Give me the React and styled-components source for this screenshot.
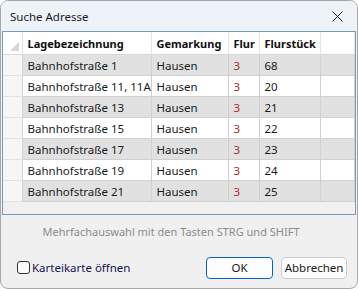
import React from "react";
import styled, { createGlobalStyle } from "styled-components";

const Global = createGlobalStyle`
  html, body {
    margin: 0;
    padding: 0;
    background: #ffffff;
  }
  body {
    font-family: "Segoe UI", "Noto Sans", "Liberation Sans", sans-serif;
  }
`;

const Window = styled.div`
  box-sizing: border-box;
  width: 358px;
  height: 289px;
  border: 1px solid #a8a8a8;
  border-radius: 8px;
  background: #f0f0f0;
  overflow: hidden;
  display: flex;
  flex-direction: column;
`;

const TitleBar = styled.div`
  height: 30px;
  flex: none;
  background: #eef3f9;
  display: flex;
  align-items: center;
  justify-content: space-between;
  padding: 0 14px 0 9px;
  font-size: 11.5px;
  color: #1a1a1a;
`;

const GridFrame = styled.div`
  flex: none;
  height: 182px;
  margin: 0 1px;
  border: 1px solid #7c98bc;
  background: #f0f0f0;
  overflow: hidden;
`;

const Table = styled.table`
  border-collapse: collapse;
  table-layout: fixed;
  width: 100%;
  font-size: 11.5px;
`;

const HeadCell = styled.th`
  height: 22px;
  padding: 0 0 0 5px;
  text-align: left;
  font-size: 11px;
  font-weight: 700;
  color: #101010;
  background: #ffffff;
  border-right: 1px solid #e4e4e4;
  border-bottom: 1px solid #d8d8d8;
  white-space: nowrap;
  overflow: hidden;
`;

const Corner = styled.th`
  position: relative;
  height: 22px;
  padding: 0;
  background: #ffffff;
  border-right: 1px solid #e4e4e4;
  border-bottom: 1px solid #d8d8d8;
  &::after {
    content: "";
    position: absolute;
    right: 3px;
    bottom: 3px;
    width: 0;
    height: 0;
    border-left: 9px solid transparent;
    border-bottom: 9px solid #d6d6d6;
  }
`;

const RowHead = styled.td`
  padding: 0;
  background: #f6f6f6;
  border-right: 1px solid #d4d4d4;
  border-bottom: 1px solid #e2e2e2;
`;

const Row = styled.tr`
  height: 21px;
  background: ${(p) => (p.$odd ? "#e1e1e1" : "#ffffff")};
`;

const Cell = styled.td`
  padding: 0 0 0 5px;
  color: ${(p) => p.$color || "#1a1a1a"};
  border-right: 1px solid #d0d0d0;
  border-bottom: 1px solid #d0d0d0;
  white-space: nowrap;
  overflow: hidden;
`;

const Hint = styled.div`
  height: 32px;
  flex: none;
  display: flex;
  align-items: center;
  justify-content: center;
  padding-right: 16px;
  font-size: 11px;
  color: #8c8c8c;
`;

const Footer = styled.div`
  flex: 1;
  display: flex;
  align-items: center;
  padding: 0 10px 0 16px;
  gap: 8px;
`;

const CheckLabel = styled.label`
  display: flex;
  align-items: center;
  gap: 2px;
  font-size: 11.5px;
  color: #141450;
  margin-right: auto;
`;

const Box = styled.span`
  box-sizing: border-box;
  width: 13px;
  height: 13px;
  border: 1px solid #333;
  border-radius: 3px;
  background: #fafafa;
`;

const Button = styled.button`
  box-sizing: border-box;
  width: ${(p) => (p.$primary ? "67px" : "66px")};
  height: 22px;
  font-family: inherit;
  font-size: 11.5px;
  color: #1a1a1a;
  background: #fdfdfd;
  border: 1px solid ${(p) => (p.$primary ? "#0067c0" : "#cfcfcf")};
  border-radius: 4px;
  padding: 0;
`;

const rows = [
  ["Bahnhofstraße 1", "Hausen", "3", "68"],
  ["Bahnhofstraße 11, 11A", "Hausen", "3", "20"],
  ["Bahnhofstraße 13", "Hausen", "3", "21"],
  ["Bahnhofstraße 15", "Hausen", "3", "22"],
  ["Bahnhofstraße 17", "Hausen", "3", "23"],
  ["Bahnhofstraße 19", "Hausen", "3", "24"],
  ["Bahnhofstraße 21", "Hausen", "3", "25"],
];

function CloseIcon() {
  return (
    <svg width="11" height="11" viewBox="0 0 11 11">
      <path d="M0.5 0.5 L10.5 10.5 M10.5 0.5 L0.5 10.5" stroke="#222" strokeWidth="1" />
    </svg>
  );
}

export default function App() {
  return (
    <>
      <Global />
      <Window>
        <TitleBar>
          <span>Suche Adresse</span>
          <CloseIcon />
        </TitleBar>
        <GridFrame>
          <Table>
            <colgroup>
              <col style={{ width: 19 }} />
              <col style={{ width: 129 }} />
              <col style={{ width: 77 }} />
              <col style={{ width: 31 }} />
              <col style={{ width: 61 }} />
              <col />
            </colgroup>
            <thead>
              <tr>
                <Corner />
                <HeadCell>Lagebezeichnung</HeadCell>
                <HeadCell>Gemarkung</HeadCell>
                <HeadCell>Flur</HeadCell>
                <HeadCell>Flurstück</HeadCell>
                <HeadCell />
              </tr>
            </thead>
            <tbody>
              {rows.map(([lage, gem, flur, stueck], i) => (
                <Row key={lage} $odd={i % 2 === 0}>
                  <RowHead />
                  <Cell>{lage}</Cell>
                  <Cell>{gem}</Cell>
                  <Cell $color="#b0282a">{flur}</Cell>
                  <Cell>{stueck}</Cell>
                  <Cell />
                </Row>
              ))}
            </tbody>
          </Table>
        </GridFrame>
        <Hint>Mehrfachauswahl mit den Tasten STRG und SHIFT</Hint>
        <Footer>
          <CheckLabel>
            <Box />
            Karteikarte öffnen
          </CheckLabel>
          <Button $primary>OK</Button>
          <Button>Abbrechen</Button>
        </Footer>
      </Window>
    </>
  );
}
